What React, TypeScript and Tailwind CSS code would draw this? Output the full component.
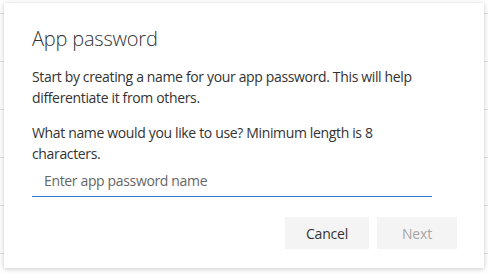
import React from "react";

export default function App() {
  const rows = [0, 1, 2, 3, 4, 5];
  return (
    <div
      className="relative w-[488px] h-[274px] overflow-hidden bg-white"
      style={{ fontFamily: '"Open Sans", "Noto Sans", sans-serif' }}
    >
      <div className="flex flex-col">
        <div className="h-[14px] border-b border-[#e3e3e3]" />
        {rows.map((r) => (
          <div key={r} className="h-[48px] border-b border-[#e3e3e3]" />
        ))}
      </div>

      <div className="absolute left-[4px] top-[3px] w-[480px] h-[265px] bg-white shadow-[0_1px_5px_rgba(0,0,0,0.22)] flex flex-col pl-[28px] pr-[27px] pt-[22px]">
        <h1 className="text-[20px] leading-[28px] font-light text-[#333333] tracking-[-0.2px]">
          App password
        </h1>
        <p className="mt-[13px] w-[400px] text-[14px] leading-[21px] text-[#333333] tracking-[-0.35px]">
          Start by creating a name for your app password. This will help
          differentiate it from others.
        </p>
        <p className="mt-[14px] w-[400px] text-[14px] leading-[21px] text-[#333333] tracking-[-0.35px]">
          What name would you like to use? Minimum length is 8 characters.
        </p>
        <div className="mt-[1px] w-[400px] h-[32px] border-b border-[#2b78d0] flex items-center pl-[12px]">
          <input
            className="w-full outline-none bg-transparent text-[14px] text-[#333] placeholder:text-[#666666] tracking-[-0.35px]"
            style={{ fontFamily: '"Open Sans", "Noto Sans", sans-serif' }}
            placeholder="Enter app password name"
          />
        </div>
        <div className="mt-[20px] flex justify-end gap-[8px]">
          <button className="w-[84px] h-[32px] bg-[#f4f4f4] text-[14px] font-medium text-[#333333] tracking-[-0.2px]">
            Cancel
          </button>
          <button className="w-[80px] h-[32px] bg-[#f4f4f4] text-[14px] font-medium text-[#a6a6a6] tracking-[-0.2px]">
            Next
          </button>
        </div>
      </div>
    </div>
  );
}
